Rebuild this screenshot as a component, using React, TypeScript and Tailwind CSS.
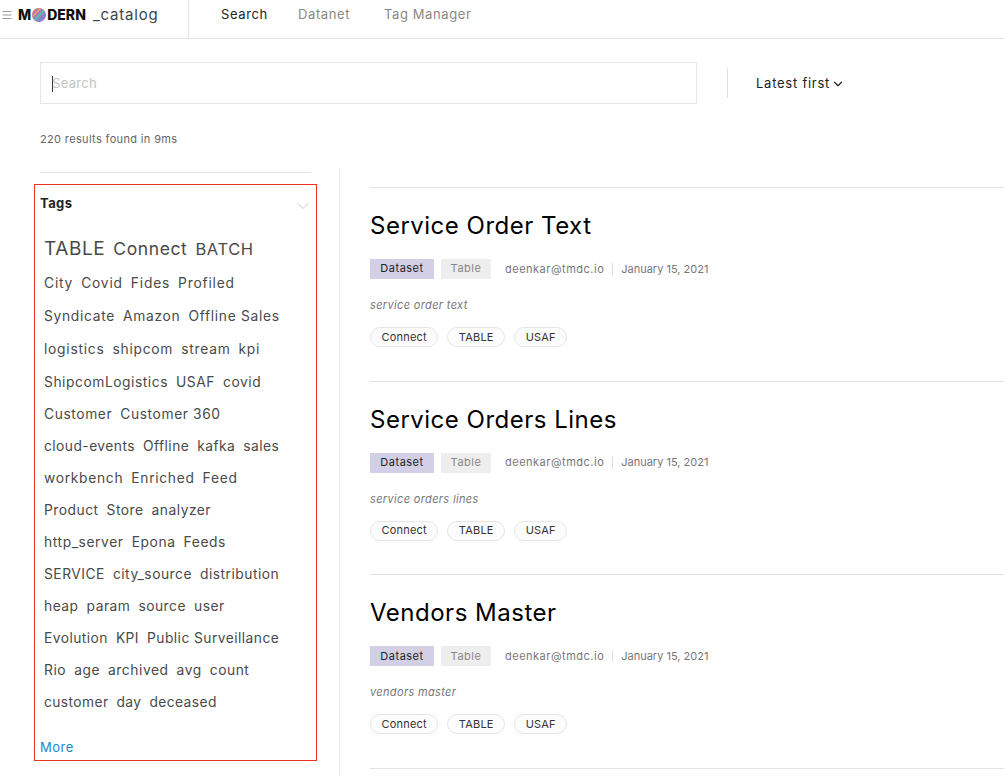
import React from 'react';
import { ChevronDown, Menu } from 'lucide-react';

const tagRows: { tags: string[]; cls: string }[] = [
  { tags: ['TABLE', 'Connect', 'BATCH'], cls: 'h-[35px] gap-[8px] tracking-[0.6px]' },
  { tags: ['City', 'Covid', 'Fides', 'Profiled'], cls: 'h-[33px] gap-[8px] tracking-[0.8px]' },
  { tags: ['Syndicate', 'Amazon', 'Offline Sales'], cls: 'h-[33px] gap-[8px] tracking-[0.7px]' },
  { tags: ['logistics', 'shipcom', 'stream', 'kpi'], cls: 'h-[33px] gap-[8px] tracking-[0.75px]' },
  { tags: ['ShipcomLogistics', 'USAF', 'covid'], cls: 'h-[32px] gap-[8px] tracking-[0.55px]' },
  { tags: ['Customer', 'Customer 360'], cls: 'h-[32px] gap-[8px] tracking-[0.6px]' },
  { tags: ['cloud-events', 'Offline', 'kafka', 'sales'], cls: 'h-[32px] gap-[8px] tracking-[0.45px]' },
  { tags: ['workbench', 'Enriched', 'Feed'], cls: 'h-[32px] gap-[8px] tracking-[0.7px]' },
  { tags: ['Product', 'Store', 'analyzer'], cls: 'h-[32px] gap-[8px] tracking-[0.5px]' },
  { tags: ['http_server', 'Epona', 'Feeds'], cls: 'h-[32px] gap-[8px] tracking-[0.6px]' },
  { tags: ['SERVICE', 'city_source', 'distribution'], cls: 'h-[32px] gap-[8px] tracking-[0.5px]' },
  { tags: ['heap', 'param', 'source', 'user'], cls: 'h-[32px] gap-[8px] tracking-[0.5px]' },
  { tags: ['Evolution', 'KPI', 'Public Surveillance'], cls: 'h-[32px] gap-[8px] tracking-[0.45px]' },
  { tags: ['Rio', 'age', 'archived', 'avg', 'count'], cls: 'h-[32px] gap-[8px] tracking-[0.55px]' },
  { tags: ['customer', 'day', 'deceased'], cls: 'h-[32px] gap-[8px] tracking-[0.4px]' },
];

const firstRowSizes: Record<string, string> = {
  TABLE: 'text-[19px]',
  Connect: 'text-[17.5px]',
  BATCH: 'text-[16.5px]',
};

const results = [
  { title: 'Service Order Text', desc: 'service order text' },
  { title: 'Service Orders Lines', desc: 'service orders lines' },
  { title: 'Vendors Master', desc: 'vendors master' },
];

const LogoO = () => (
  <svg viewBox="0 0 14 14" className="mx-[1px] h-[14px] w-[14px]">
    <defs>
      <clipPath id="logo-o">
        <circle cx="7" cy="7" r="7" />
      </clipPath>
    </defs>
    <g clipPath="url(#logo-o)">
      <rect width="14" height="14" fill="#a57cc4" />
      <path d="M-2 6 L6 -2 L8 -2 L-2 8Z" fill="#e8705f" />
      <path d="M-2 10 L10 -2 L12 -2 L-2 12Z" fill="#eda24f" />
      <path d="M0 13 L13 0 L14 2 L2 14Z" fill="#56bdad" />
      <path d="M4 15 L15 4 L15 6 L6 15Z" fill="#5b93d6" />
    </g>
  </svg>
);

export default function App() {
  return (
    <div className="h-[776px] w-[1004px] overflow-hidden bg-white font-['Inter','Liberation_Sans',sans-serif] text-[#333]">
      {/* Top bar */}
      <header className="flex h-[39px] items-stretch border-b border-[#e2e4e8]">
        <div className="flex w-[189px] items-center border-r border-[#e2e4e8] pb-[9px] pl-[1px]">
          <Menu className="h-[12px] w-[12px] text-[#777]" strokeWidth={1.5} />
          <span className="ml-[5px] flex items-center text-[14px] font-extrabold leading-none text-[#111]">
            M<LogoO />DERN
          </span>
          <span className="ml-[7px] text-[15px] leading-none tracking-[0.8px] text-[#444]">_catalog</span>
        </div>
        <nav className="flex pb-[9px] pl-[32px] text-[13px] tracking-[0.6px]">
          <a className="flex w-[77px] items-center text-[#222]">Search</a>
          <a className="flex w-[86px] items-center text-[#888]">Datanet</a>
          <a className="flex items-center text-[#888]">Tag Manager</a>
        </nav>
      </header>

      {/* Search row */}
      <div className="flex items-center pl-[40px] pt-[23px]">
        <div className="flex h-[42px] w-[657px] items-center border border-[#e6e6e6] pl-[11px] pt-[1px] text-[13px] tracking-[0.3px] text-[#c4c4c4]">
          <span className="h-[16px] w-px bg-[#333]" />
          <span className="-ml-px">Search</span>
        </div>
        <div className="ml-[30px] h-[30px] w-px bg-[#e2e2e2]" />
        <div className="ml-[28px] flex items-center pt-[2px] text-[13px] tracking-[0.75px] text-[#222]">
          Latest first
          <ChevronDown className="ml-[1px] h-[14px] w-[14px]" strokeWidth={2} />
        </div>
      </div>

      <p className="pl-[40px] pt-[27px] text-[11px] leading-[16px] tracking-[0.35px] text-[#666]">220 results found in 9ms</p>

      <div className="flex pt-[21px]">
        {/* Left filters */}
        <aside className="h-[640px] w-[340px] border-r border-[#e6e6e6] pl-[34px] pt-[4px]">
          <div className="ml-[6px] w-[271px] border-t border-[#e2e2e2]" />
          <div className="mt-[11px] h-[577px] w-[283px] border border-[#ea3323] pl-[5px]">
            <div className="flex h-[38px] items-center justify-between pr-[3px]">
              <h3 className="text-[13px] font-bold tracking-[0.4px] text-[#222]">Tags</h3>
              <ChevronDown className="mt-[3px] h-[20px] w-[20px] text-[#bbb]" strokeWidth={1} />
            </div>
            <div className="mt-[9px] pl-[4px] text-[13.8px] text-[#4a4a4a]">
              {tagRows.map((row, i) => (
                <div key={i} className={`flex items-center whitespace-nowrap ${row.cls}`}>
                  {row.tags.map((t) => (
                    <span key={t} className={i === 0 ? firstRowSizes[t] : ''}>
                      {t}
                    </span>
                  ))}
                </div>
              ))}
            </div>
            <a className="mt-[20px] block text-[13px] tracking-[0.5px] text-[#1a88d0]">More</a>
          </div>
        </aside>

        {/* Results */}
        <main className="flex-1 pl-[30px] pt-[19px]">
          {results.map((r) => (
            <article key={r.title} className="h-[193.7px] border-t border-[#e2e2e2]">
              <h2 className="pt-[22px] text-[24px] font-[420] leading-[32px] tracking-[0.5px] text-[#000]">{r.title}</h2>
              <div className="mt-[17px] flex h-[20px] items-center text-[11px] tracking-[0.5px]">
                <span className="flex h-[20px] w-[64px] items-center justify-center bg-[#d3cfe6] pb-[1px] text-[#222]">Dataset</span>
                <span className="ml-[7px] flex h-[20px] w-[50px] items-center justify-center bg-[#eeeeee] pb-[1px] text-[#888]">Table</span>
                <span className="ml-[14px] text-[#777]">deenkar@tmdc.io</span>
                <span className="ml-[8px] h-[12px] w-px bg-[#ddd]" />
                <span className="ml-[8px] tracking-[0px] text-[#777]">January 15, 2021</span>
              </div>
              <p className="mt-[18px] text-[11px] italic leading-[16px] tracking-[0.35px] text-[#777]">{r.desc}</p>
              <div className="mt-[14px] flex gap-[9px] text-[11px] tracking-[0.2px] text-[#333]">
                {['Connect', 'TABLE', 'USAF'].map((t) => (
                  <span key={t} className="flex h-[20px] items-center rounded-full border border-[#e6e6e6] bg-[#fcfcfc] px-[10.5px]">
                    {t}
                  </span>
                ))}
              </div>
            </article>
          ))}
          <div className="border-t border-[#e2e2e2]" />
        </main>
      </div>
    </div>
  );
}
